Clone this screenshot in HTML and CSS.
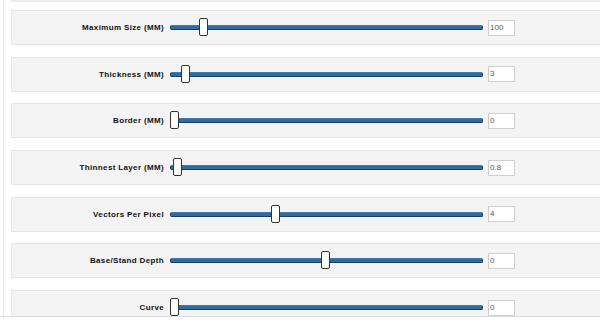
FILE: index.html
```html
<!DOCTYPE html>
<html lang="en">
<head>
    <meta charset="UTF-8">
    <title>Settings</title>
    <link rel="stylesheet" href="styles.css">
</head>
<body>

<div class="page">
    <div class="top-edge"></div>

    <div class="row">
        <div class="label">Maximum Size (MM)</div>
        <div class="track"><div class="thumb" style="left: 28px"></div></div>
        <div class="value">100</div>
    </div>

    <div class="row">
        <div class="label">Thickness (MM)</div>
        <div class="track"><div class="thumb" style="left: 10px"></div></div>
        <div class="value">3</div>
    </div>

    <div class="row">
        <div class="label">Border (MM)</div>
        <div class="track"><div class="thumb" style="left: -1px"></div></div>
        <div class="value">0</div>
    </div>

    <div class="row">
        <div class="label">Thinnest Layer (MM)</div>
        <div class="track"><div class="thumb" style="left: 2px"></div></div>
        <div class="value">0.8</div>
    </div>

    <div class="row">
        <div class="label">Vectors Per Pixel</div>
        <div class="track"><div class="thumb" style="left: 100px"></div></div>
        <div class="value">4</div>
    </div>

    <div class="row">
        <div class="label">Base/Stand Depth</div>
        <div class="track"><div class="thumb" style="left: 150px"></div></div>
        <div class="value">0</div>
    </div>

    <div class="row">
        <div class="label">Curve</div>
        <div class="track"><div class="thumb" style="left: -1px"></div></div>
        <div class="value">0</div>
    </div>
</div>

<div class="footer"></div>

</body>
</html>
```

FILE: styles.css
```css
body {
    margin: 0;
    background-color: #fff;
    font-family: "Liberation Sans", Arial, sans-serif;
    overflow: hidden;
}
.page {
    margin-left: 3px;
    border-left: 1px solid #e6e6e6;
    padding-left: 7px;
    height: 322px;
}
.top-edge {
    height: 2px;
    background-color: #ececec;
    margin-bottom: 8px;
}
.row {
    display: flex;
    align-items: center;
    height: 33px;
    margin-bottom: 11.7px;
    background-color: #f4f4f4;
    border: 1px solid #e6e6e6;
    border-right: none;
    border-radius: 2px 0 0 2px;
}
.label {
    width: 152px;
    text-align: right;
    font-size: 8px;
    font-weight: bold;
    color: #111;
    letter-spacing: 0.35px;
}
.track {
    position: relative;
    width: 311px;
    height: 3px;
    margin-left: 6px;
    background-color: #2f6ca4;
    border: 1px solid #1c3d5c;
    border-top-color: #3f7bb2;
    border-radius: 2px;
}
.thumb {
    position: absolute;
    top: -8px;
    width: 7px;
    height: 16px;
    background-color: #fff;
    border: 1px solid #333;
    border-radius: 2px;
}
.value {
    width: 24px;
    height: 14px;
    margin-left: 5px;
    background-color: #fff;
    border: 1px solid #cfcfcf;
    font-size: 8px;
    line-height: 14px;
    color: #555;
    padding-left: 1px;
}
.footer {
    position: absolute;
    left: 0;
    right: 0;
    top: 316px;
    height: 6px;
    background-color: #fff;
    border-top: 1px solid #dcdcdc;
}
```
